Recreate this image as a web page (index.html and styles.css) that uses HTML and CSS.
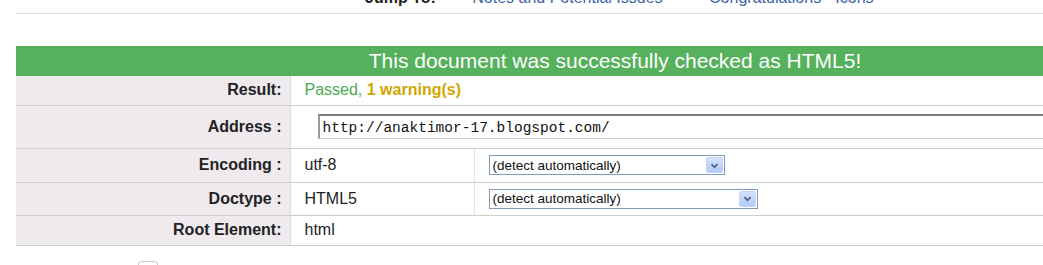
FILE: index.html
```html
<!doctype html>
<html lang="en">
  <head>
    <meta charset="utf-8">
    <title>Validation Results</title>
    <link rel="stylesheet" href="styles.css">
  </head>
  <body>
    <div class="jump">
      <span class="jump-label">Jump To:</span>
      <a href="#notes" class="jump-link">Notes and Potential Issues</a>
      <a href="#congrats" class="jump-link">Congratulations · Icons</a>
    </div>

    <div class="results">
      <table class="header">
        <colgroup>
          <col class="col-label">
          <col class="col-value">
          <col>
        </colgroup>
        <thead>
          <tr>
            <th colspan="3" class="valid">This document was successfully checked as HTML5!</th>
          </tr>
        </thead>
        <tbody>
          <tr class="row-result">
            <th>Result:</th>
            <td colspan="2"><span class="passed">Passed,</span> <span class="warn">1 warning(s)</span></td>
          </tr>
          <tr class="row-address">
            <th>Address :</th>
            <td colspan="2"><input type="text" class="uri" value="http://anaktimor-17.blogspot.com/"></td>
          </tr>
          <tr class="row-opt">
            <th>Encoding :</th>
            <td>utf-8</td>
            <td class="opt">
              <div class="select sel-enc">
                <span>(detect automatically)</span>
                <span class="arrow">
                  <svg width="17" height="17" viewBox="0 0 17 17"><path d="M5 7 L8.5 10.5 L12 7" fill="none" stroke="#4d6185" stroke-width="2"/></svg>
                </span>
              </div>
            </td>
          </tr>
          <tr class="row-opt">
            <th>Doctype :</th>
            <td>HTML5</td>
            <td class="opt">
              <div class="select sel-doc">
                <span>(detect automatically)</span>
                <span class="arrow">
                  <svg width="17" height="17" viewBox="0 0 17 17"><path d="M5 7 L8.5 10.5 L12 7" fill="none" stroke="#4d6185" stroke-width="2"/></svg>
                </span>
              </div>
            </td>
          </tr>
          <tr class="row-root">
            <th>Root Element:</th>
            <td colspan="2">html</td>
          </tr>
        </tbody>
      </table>
    </div>

    <div class="below">
      <span class="check"></span>
    </div>
  </body>
</html>
```
FILE: styles.css
```css
/* Reset */
* {
  margin: 0;
  padding: 0;
  box-sizing: border-box;
}

html, body {
  overflow: hidden;
}

body {
  font-family: "Liberation Sans", Arial, sans-serif;
  font-size: 16px;
  color: #222;
  background: #fff;
  padding-left: 16px;
}

/* Jump bar (page is scrolled, so it is cut at the top) */
.jump {
  margin-top: -11px;
  height: 25px;
  line-height: 18px;
  border-bottom: 1px solid #dcdce4;
  padding-left: 349px;
  white-space: nowrap;
}

.jump-label {
  font-weight: bold;
  color: #222;
  margin-right: 32px;
}

.jump-link {
  color: #3a64a8;
  text-decoration: none;
  margin-right: 42px;
}

/* Results table */
.results {
  margin-top: 32px;
  width: 1198px;
}

.header {
  width: 100%;
  border-collapse: collapse;
  table-layout: fixed;
}

.col-label {
  width: 274px;
}

.col-value {
  width: 184px;
}

.header th.valid {
  background-color: #55b15b;
  color: #fff;
  font-size: 21px;
  font-weight: normal;
  text-align: center;
  height: 30px;
  padding: 0;
  line-height: 28px;
}

.header tbody th {
  background-color: #eeeaee;
  text-align: right;
  padding-right: 8px;
  font-size: 16px;
  font-weight: bold;
  color: #222;
  border-bottom: 1px solid #cdcdcd;
  border-right: 1px solid #ddd;
}

.header tbody td {
  padding-left: 14px;
  border-bottom: 1px solid #cdcdcd;
  color: #222;
}

.row-result th,
.row-result td {
  height: 29px;
}

.row-address th,
.row-address td {
  height: 43px;
}

.row-opt th,
.row-opt td {
  height: 34px;
}

.row-opt + .row-opt th,
.row-opt + .row-opt td {
  height: 33px;
}

.row-root th,
.row-root td {
  height: 30px;
}

.passed {
  color: #4caa55;
}

.warn {
  color: #cfa600;
  font-weight: bold;
}

.uri {
  display: block;
  margin-left: 13px;
  width: 900px;
  height: 25px;
  border: 1px solid #c7c7c7;
  border-top: 2px solid #7a7a7a;
  border-left: 2px solid #9a9a9a;
  font-family: "Liberation Mono", "Courier New", monospace;
  font-size: 14.5px;
  padding: 1px 3px 0;
  color: #111;
}

.header td.opt {
  border-left: 1px solid #e4e4e4;
}

/* XP-style select */
.select {
  display: flex;
  align-items: center;
  justify-content: space-between;
  height: 20px;
  border: 1px solid #7f9db9;
  background: #fff;
  padding: 0 1px 0 3px;
  font-size: 13.5px;
  color: #111;
}

.sel-enc {
  width: 236px;
}

.sel-doc {
  width: 269px;
}

.arrow {
  display: flex;
  width: 17px;
  height: 16px;
  border-radius: 2px;
  background: linear-gradient(#d5e2fd, #b2c9f8);
  border: 1px solid #c3d3fd;
  align-items: center;
  justify-content: center;
}

.arrow svg {
  display: block;
}

/* Below the table */
.below {
  padding: 15px 0 0 122px;
}

.check {
  display: block;
  width: 20px;
  height: 20px;
  border: 1px solid #c8c8c8;
  border-radius: 3px;
}
```
